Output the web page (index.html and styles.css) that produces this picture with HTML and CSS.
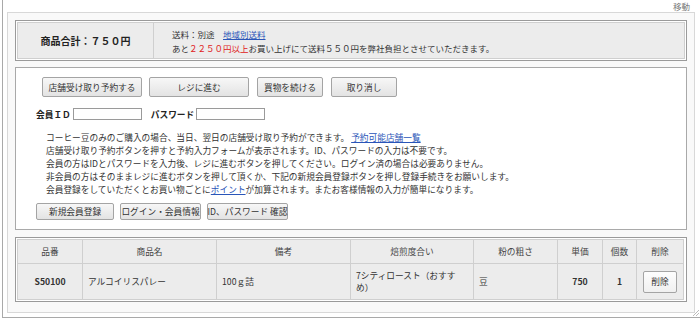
FILE: index.html
```html
<!DOCTYPE html>
<html lang="ja">
<head>
<meta charset="utf-8">
<link rel="stylesheet" href="styles.css">
</head>
<body>
<div class="frame">
  <div class="topbar"><span class="move">移動</span></div>
  <div class="panel">
    <div class="summary">
      <div class="summary-inner">
        <div class="total">商品合計：７５０円</div>
        <div class="ship">
          <div>送料：別途　<a href="#" class="link">地域別送料</a></div>
          <div>あと<span class="red">２２５０円以上</span>お買い上げにて送料５５０円を弊社負担とさせていただきます。</div>
        </div>
      </div>
    </div>

    <div class="actions">
      <div class="btnrow">
        <button class="btn w100">店舗受け取り予約する</button>
        <button class="btn w100">レジに進む</button>
        <button class="btn w66">買物を続ける</button>
        <button class="btn w66">取り消し</button>
      </div>
      <div class="login">
        <span class="lbl">会員ＩＤ</span>
        <span class="input"></span>
        <span class="lbl lbl2">パスワード</span>
        <span class="input"></span>
      </div>
      <div class="notes">
        <div>コーヒー豆のみのご購入の場合、当日、翌日の店舗受け取り予約ができます。 <a href="#" class="link">予約可能店舗一覧</a></div>
        <div>店舗受け取り予約ボタンを押すと予約入力フォームが表示されます。ID、パスワードの入力は不要です。</div>
        <div>会員の方はIDとパスワードを入力後、レジに進むボタンを押してください。ログイン済の場合は必要ありません。</div>
        <div>非会員の方はそのままレジに進むボタンを押して頂くか、下記の新規会員登録ボタンを押し登録手続きをお願いします。</div>
        <div>会員登録をしていただくとお買い物ごとに<a href="#" class="link">ポイント</a>が加算されます。またお客様情報の入力が簡単になります。</div>
      </div>
      <div class="btnrow2">
        <button class="btn sm w78">新規会員登録</button>
        <button class="btn sm w81">ログイン・会員情報</button>
        <button class="btn sm w81">ID、パスワード 確認</button>
      </div>
    </div>

    <div class="cart">
      <table class="items">
        <colgroup>
          <col class="c1"><col class="c2"><col class="c3"><col class="c4"><col class="c5"><col class="c6"><col class="c7"><col class="c8">
        </colgroup>
        <thead>
          <tr>
            <th>品番</th><th>商品名</th><th>備考</th><th>焙煎度合い</th><th>粉の粗さ</th><th>単価</th><th>個数</th><th>削除</th>
          </tr>
        </thead>
        <tbody>
          <tr>
            <td class="ctr b">S50100</td>
            <td>アルコイリスパレー</td>
            <td>100ｇ詰</td>
            <td>7シティロースト（おすすめ）</td>
            <td>豆</td>
            <td class="ctr b">750</td>
            <td class="ctr b">1</td>
            <td class="ctr"><button class="del">削除</button></td>
          </tr>
        </tbody>
      </table>
    </div>
  </div>
  <svg class="grip" width="6" height="6" viewBox="0 0 6 6"><path d="M6 0 L0 6 M6 3 L3 6" stroke="#bbb" stroke-width="1"/></svg>
</div>
</body>
</html>
```

FILE: styles.css
```css
html, body {
  margin: 0;
  padding: 0;
  background: #fff;
}
body {
  font-family: "Noto Sans CJK JP", "Noto Sans", sans-serif;
  font-size: 8.7px;
  color: #333;
}
.frame {
  position: relative;
  margin-left: 2px;
  width: 697px;
  height: 317px;
  border-left: 1px solid #a9a9a9;
  border-bottom: 1px solid #a9a9a9;
}
.topbar {
  height: 12px;
  display: flex;
  justify-content: flex-end;
  align-items: center;
  padding-right: 10px;
}
.move {
  font-size: 8.5px;
  line-height: 12px;
  color: #777;
}
.panel {
  margin-left: 4px;
  width: 672px;
  height: 285px;
  border: 1px solid #d8d8d8;
  background: #f9f9f9;
  padding: 7px;
}
.summary {
  border: 1px solid #9a9a9a;
  padding: 1px;
  background: #fff;
}
.summary-inner {
  display: flex;
  height: 35px;
  border: 1px solid #cfcfcf;
  background: #ececec;
}
.total {
  width: 135px;
  border-right: 1px solid #cfcfcf;
  display: flex;
  align-items: center;
  justify-content: center;
  font-size: 10px;
  font-weight: bold;
  color: #222;
}
.ship {
  padding-left: 18px;
  display: flex;
  flex-direction: column;
  justify-content: center;
  line-height: 14px;
  font-size: 8.5px;
}
.link {
  color: #2a55b8;
  text-decoration: underline;
}
.red {
  color: #e02020;
}
.actions {
  margin-top: 6px;
  height: 152px;
  border: 1px solid #a9a9a9;
  background: #fff;
  padding: 9px 0 0 0;
}
.btnrow {
  display: flex;
  padding-left: 26px;
  gap: 7px;
}
.btn {
  font-family: inherit;
  font-size: 8.7px;
  color: #333;
  height: 20px;
  padding: 0;
  border: 1px solid #a4a4a4;
  border-radius: 2px;
  background: linear-gradient(#f7f7f7, #e3e3e3);
  display: flex;
  align-items: center;
  justify-content: center;
  white-space: nowrap;
}
.w100 { width: 100px; }
.w66 { width: 66px; margin-left: 1px; }
.w78 { width: 78px; }
.w81 { width: 81px; }
.login {
  display: flex;
  align-items: center;
  margin-top: 11px;
  padding-left: 20px;
  height: 12px;
}
.lbl {
  font-weight: bold;
  color: #222;
  margin-right: 2px;
}
.lbl2 {
  margin-left: 9px;
}
.input {
  width: 67px;
  height: 10px;
  border: 1px solid #9a9a9a;
  background: #fff;
}
.notes {
  margin-top: 11px;
  padding-left: 30px;
  line-height: 13px;
  white-space: nowrap;
}
.btnrow2 {
  display: flex;
  margin-top: 7px;
  padding-left: 20px;
  gap: 6px;
}
.btn.sm {
  height: 17px;
}
.cart {
  margin-top: 7px;
  border: 1px solid #9a9a9a;
  padding: 1px;
  background: #fff;
}
.items {
  width: 666px;
  border-collapse: collapse;
  table-layout: fixed;
}
.c1 { width: 65px; }
.c2 { width: 134px; }
.c3 { width: 134px; }
.c4 { width: 123px; }
.c5 { width: 84px; }
.c6 { width: 45px; }
.c7 { width: 34px; }
.c8 { width: 47px; }
.items th, .items td {
  border: 1px solid #cfcfcf;
  background: #ececec;
  font-size: 8.7px;
  line-height: 12px;
}
.items th {
  height: 23px;
  padding: 0;
  font-weight: normal;
  color: #444;
  text-align: center;
}
.items td {
  height: 35px;
  padding: 0 5px;
  text-align: left;
  color: #333;
}
.items td.ctr {
  text-align: center;
  padding: 0;
}
.items td.b {
  font-weight: bold;
  color: #333;
}
.del {
  font-family: inherit;
  font-size: 8.7px;
  color: #333;
  width: 34px;
  height: 22px;
  padding: 0;
  border: 1px solid #a4a4a4;
  border-radius: 2px;
  background: linear-gradient(#fdfdfd, #f0f0f0);
}
.grip {
  position: absolute;
  right: 1px;
  bottom: 1px;
}
```
